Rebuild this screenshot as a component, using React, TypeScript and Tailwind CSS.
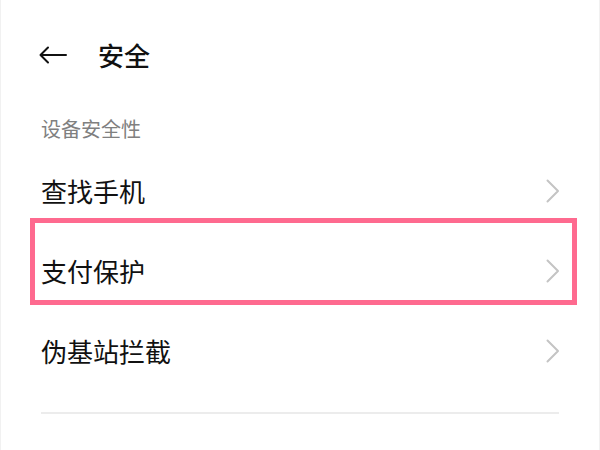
import React from 'react';

const rows = ['查找手机', '支付保护', '伪基站拦截'];

const Chevron = () => (
  <svg width="14" height="24" viewBox="0 0 14 24" fill="none">
    <polyline points="1.5,1.5 12,12 1.5,22.5" stroke="#c4c4c4" strokeWidth="2" strokeLinecap="round" strokeLinejoin="round" />
  </svg>
);

export default function App() {
  return (
    <div
      className="relative w-[600px] h-[450px] overflow-hidden bg-white border-x border-[#f1f1f1]"
      style={{ fontFamily: '"Noto Sans CJK SC", "Noto Sans", sans-serif' }}
    >
      {/* Header */}
      <div className="h-[110px] flex items-center pl-[37px]">
        <svg width="30" height="18" viewBox="0 0 30 18" fill="none">
          <path d="M28 9H2.5M10 1.5L2.5 9L10 16.5" stroke="#111" strokeWidth="2" strokeLinecap="round" strokeLinejoin="round" />
        </svg>
        <span className="ml-[30px] text-[26px] font-medium text-[#111] leading-none">安全</span>
      </div>

      {/* Section title */}
      <div className="h-[41px] pl-[40px] pt-[4px] text-[20px] leading-[30px] text-[#808080]">设备安全性</div>

      {/* Rows */}
      <div>
        {rows.map((r) => (
          <div key={r} className="h-[80px] flex items-center justify-between pl-[40px] pr-[39px]">
            <span className="text-[26px] text-[#111] leading-none">{r}</span>
            <Chevron />
          </div>
        ))}
      </div>

      <div className="mt-[21px] mx-[40px] h-[2px] bg-[#ececec]" />

      {/* Highlight annotation */}
      <div className="absolute left-[29px] top-[218px] w-[547px] h-[87px] border-[5px] border-[#fe6a8f]" />
    </div>
  );
}
